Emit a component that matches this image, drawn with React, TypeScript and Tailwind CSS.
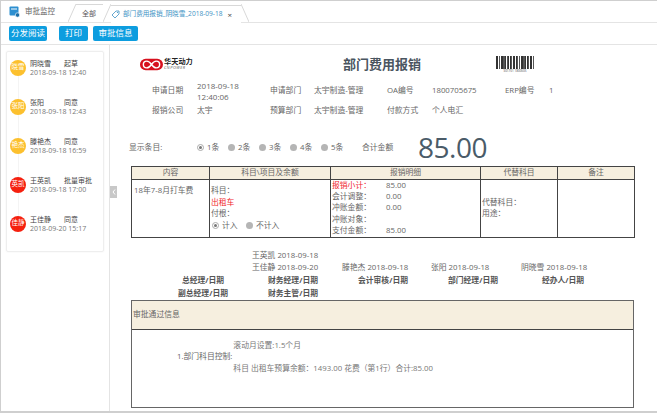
import React from "react";

const flow = [
  { tag: "晓雪", name: "阴晓雪", action: "起草", time: "2018-09-18 12:40", color: "bg-[#fcc02e]" },
  { tag: "张阳", name: "张阳", action: "同意", time: "2018-09-18 12:43", color: "bg-[#fcc02e]" },
  { tag: "艳杰", name: "滕艳杰", action: "同意", time: "2018-09-18 16:59", color: "bg-[#fcc02e]" },
  { tag: "英凯", name: "王英凯", action: "批量审批", time: "2018-09-18 17:00", color: "bg-[#f5200f]" },
  { tag: "佳静", name: "王佳静", action: "同意", time: "2018-09-20 15:17", color: "bg-[#f5200f]" },
];

const barWidths = [1, 1, 2, 1, 1, 2, 1, 2, 1, 1, 2, 1, 1, 1, 2, 2, 1, 1, 2, 1, 1, 2, 1, 1, 2];

function Slant({ flip }: { flip?: boolean }) {
  return (
    <svg width="8" height="18" viewBox="0 0 8 18" className="shrink-0 self-end">
      {flip ? (
        <path d="M0 0 L8 18" stroke="#d8d8d8" strokeWidth="1" fill="none" />
      ) : (
        <path d="M8 0 L0 18" stroke="#d8d8d8" strokeWidth="1" fill="none" />
      )}
    </svg>
  );
}

function Radio({ label, checked }: { label: string; checked?: boolean }) {
  return (
    <span className="flex items-center gap-[3px] w-[31px] shrink-0 whitespace-nowrap">
      <span
        className={
          checked
            ? "w-[7px] h-[7px] shrink-0 rounded-full border border-[#aaa] flex items-center justify-center"
            : "w-[7px] h-[7px] shrink-0 rounded-full bg-[#b5b5b5]"
        }
      >
        {checked && <span className="w-[3px] h-[3px] rounded-full bg-[#777]" />}
      </span>
      {label}
    </span>
  );
}

export default function App() {
  return (
    <div
      className="w-[657px] h-[413px] overflow-hidden bg-white flex flex-col border-t border-l border-b-2 border-[#cfcfcf] text-[#666] text-[7.8px] leading-none"
      style={{ fontFamily: '"Open Sans", "Noto Sans CJK SC", sans-serif' }}
    >
      {/* tab bar */}
      <div className="h-[22px] shrink-0 flex items-end border-b border-[#e4e4e4] relative">
        <div className="w-[67px] h-full flex items-center pl-[8px] gap-[5px]">
          <svg width="11" height="12" viewBox="0 0 11 12">
            <rect x="0.5" y="0.5" width="9" height="9" rx="1" fill="#2d8fd0" />
            <rect x="2" y="2.5" width="6" height="1" fill="#fff" />
            <circle cx="8.5" cy="9" r="2.2" fill="#1b6fa8" stroke="#fff" strokeWidth="0.6" />
          </svg>
          <span className="text-[#666] text-[7.5px] whitespace-nowrap">审批监控</span>
        </div>
        <Slant />
        <div className="w-[27px] h-[18px] border-t border-[#d8d8d8] flex items-center pl-[6px] text-[7px] text-[#555]">全部</div>
        <Slant />
        <div className="w-[130px] h-[18px] border-t border-[#d8d8d8] bg-white flex items-center gap-[3px] text-[6.6px] text-[#3d92c4] whitespace-nowrap -mb-px">
          <svg width="9" height="9" viewBox="0 0 9 9" className="shrink-0">
            <path d="M1 5 L5 1 H8 V4 L4 8 Z" fill="none" stroke="#3d92c4" strokeWidth="0.8" />
            <circle cx="6.5" cy="2.5" r="0.6" fill="#3d92c4" />
          </svg>
          部门费用报销_阴晓雪_2018-09-18
          <span className="ml-[2px] text-[#444] text-[8px]">×</span>
        </div>
        <Slant flip />
      </div>

      {/* toolbar */}
      <div className="h-[22px] shrink-0 flex items-center pl-[8px] border-b border-[#e4e4e4] text-white text-[8.5px]">
        <button className="w-[38px] h-[15px] rounded-[2px] bg-[#0d9ddf]">分发阅读</button>
        <button className="w-[29px] h-[15px] rounded-[2px] bg-[#0d9ddf] ml-[12px]">打印</button>
        <button className="w-[45px] h-[15px] rounded-[2px] bg-[#0d9ddf] ml-[5px]">审批信息</button>
      </div>

      <div className="flex-1 flex min-h-0 relative">
        {/* approval flow sidebar */}
        <aside className="w-[109px] shrink-0 border-r border-[#e4e4e4] pt-[6px] pl-[5px]">
          <div className="relative w-[98px] h-[201px] rounded-[2px] border border-[#eee] shadow-[0_0_2px_#eee] pt-[6px] pl-[3px] flex flex-col gap-[20px]">
            <span className="absolute left-[11px] top-[14px] h-[160px] w-px bg-[#f4f4f4]" />
            {flow.map((item) => (
              <div key={item.name} className="relative flex items-center gap-[3px] h-[19px]">
                <span
                  className={`w-[16px] h-[16px] rounded-full ${item.color} text-white text-[6.5px] flex items-center justify-center shrink-0`}
                >
                  {item.tag}
                </span>
                <div className="flex flex-col gap-[2px] ml-[1px] text-[7px] whitespace-nowrap">
                  <div className="flex text-[#444]">
                    <span className="w-[34px]">{item.name}</span>
                    <span>{item.action}</span>
                  </div>
                  <span className="text-[#777]">{item.time}</span>
                </div>
              </div>
            ))}
          </div>
        </aside>

        {/* collapse handle */}
        <div className="absolute left-[109px] top-[141px] w-[7px] h-[12px] bg-[#c8c8c8] flex items-center justify-center">
          <svg width="4" height="6" viewBox="0 0 4 6">
            <path d="M3 0.5 L1 3 L3 5.5" fill="none" stroke="#fff" strokeWidth="1" />
          </svg>
        </div>

        {/* form */}
        <main className="flex-1 min-w-0">
          <div className="flex items-center h-[16px] mt-[11px] ml-[30px]">
            <div className="w-[52px] flex items-center gap-[1px]">
              <svg width="23" height="13" viewBox="0 0 24 13" className="shrink-0">
                <rect x="0" y="0.5" width="24" height="12" rx="6" fill="#d7101e" />
                <path
                  d="M12 6.5 C10 3.5 8.5 3 7 3 C5 3 3.5 4.5 3.5 6.5 C3.5 8.5 5 10 7 10 C8.5 10 10 9.5 12 6.5 C14 3.5 15.5 3 17 3 C19 3 20.5 4.5 20.5 6.5 C20.5 8.5 19 10 17 10 C15.5 10 14 9.5 12 6.5 Z"
                  fill="none"
                  stroke="#fff"
                  strokeWidth="1.5"
                />
              </svg>
              <div className="flex flex-col gap-[1px] whitespace-nowrap">
                <span className="text-[7.2px] font-bold text-[#222]">华天动力</span>
                <span className="text-[4px] italic tracking-[0.5px] text-[#555]">CNPOWER</span>
              </div>
            </div>
            <h1 className="ml-[151px] text-[13px] font-bold text-[#4a5560] whitespace-nowrap">部门费用报销</h1>
            <div className="ml-[75px] flex flex-col items-center gap-[1px]">
              <div className="flex h-[13px] w-[38px] gap-[0.5px]">
                {barWidths.map((w, i) => (
                  <span key={i} className={w === 1 ? "w-[1px] bg-[#333]" : "w-[1.5px] bg-[#555]"} />
                ))}
              </div>
              <span className="text-[3px] text-[#444] whitespace-nowrap">S01701 1800505</span>
            </div>
          </div>

          {/* request info */}
          <div className="ml-[42px] mt-[8px] grid grid-cols-[45px_73px_44px_73px_45px_73px_44px_40px] gap-y-[5px] items-center whitespace-nowrap">
            <span>申请日期</span>
            <span className="text-[8px] leading-[11px]">
              2018-09-18
              <br />
              12:40:06
            </span>
            <span>申请部门</span>
            <span>太宇制造-管理</span>
            <span>OA编号</span>
            <span>1800705675</span>
            <span>ERP编号</span>
            <span>1</span>
            <span>报销公司</span>
            <span>太宇</span>
            <span>预算部门</span>
            <span>太宇制造-管理</span>
            <span>付款方式</span>
            <span>个人电汇</span>
          </div>

          {/* display count + total */}
          <div className="ml-[19px] mt-[18px] h-[30px] flex items-center whitespace-nowrap">
            <span className="w-[68px]">显示条目:</span>
            <Radio label="1条" checked />
            <Radio label="2条" />
            <Radio label="3条" />
            <Radio label="4条" />
            <Radio label="5条" />
            <span className="ml-[10px] w-[56px]">合计金额</span>
            <span className="text-[28px] tracking-[-0.5px] text-[#4a5b68] -mt-[2px]">85.00</span>
          </div>

          {/* expense table */}
          <table className="ml-[21px] mt-[3px] w-[503px] table-fixed border-collapse border border-[#666] text-left">
            <thead>
              <tr className="h-[13px] bg-[#f6efdf]">
                <th className="w-[78px] border border-[#444] font-normal text-center">内容</th>
                <th className="w-[121px] border border-[#444] font-normal text-center">科目\项目及余额</th>
                <th className="w-[150px] border border-[#444] font-normal text-center">报销明细</th>
                <th className="w-[77px] border border-[#444] font-normal text-center">代替科目</th>
                <th className="w-[77px] border border-[#444] font-normal text-center">备注</th>
              </tr>
            </thead>
            <tbody>
              <tr className="h-[58px]">
                <td className="border border-[#444] align-top pt-[7px] pl-[2px]">18年7-8月打车费</td>
                <td className="border border-[#444] pl-[1px]">
                  <div className="flex flex-col gap-[4px]">
                    <span>科目：</span>
                    <span className="text-[#f01c2c]">出租车</span>
                    <span>付根：</span>
                    <span className="flex items-center pl-[1px]">
                      <Radio label="计入" checked />
                      <span className="w-[3px]" />
                      <Radio label="不计入" />
                    </span>
                  </div>
                </td>
                <td className="border border-[#444] pl-[1px]">
                  <div className="grid grid-cols-[54px_1fr] gap-y-[3.5px]">
                    <span className="text-[#f01c2c]">报销小计：</span>
                    <span>85.00</span>
                    <span>会计调整：</span>
                    <span>0.00</span>
                    <span>冲账金额：</span>
                    <span>0.00</span>
                    <span>冲账对象：</span>
                    <span />
                    <span>支付金额：</span>
                    <span>85.00</span>
                  </div>
                </td>
                <td className="border border-[#444] pl-[1px]">
                  <div className="flex flex-col gap-[4px]">
                    <span>代替科目：</span>
                    <span>用途：</span>
                  </div>
                </td>
                <td className="border border-[#444]" />
              </tr>
            </tbody>
          </table>

          {/* sign-off dates */}
          <div className="ml-[142px] mt-[14px] grid grid-cols-[90px_89px_90px_80px] items-end whitespace-nowrap">
            <div className="flex flex-col gap-[4px]">
              <span>王英凯 2018-09-18</span>
              <span>王佳静 2018-09-20</span>
            </div>
            <span>滕艳杰 2018-09-18</span>
            <span>张阳 2018-09-18</span>
            <span>阴晓雪 2018-09-18</span>
          </div>

          {/* sign-off roles */}
          <div className="ml-[48px] mt-[6px] w-[450px] grid grid-cols-5 gap-y-[5px] text-center font-bold text-[#555] whitespace-nowrap">
            <span>总经理/日期</span>
            <span>财务经理/日期</span>
            <span>会计审核/日期</span>
            <span>部门经理/日期</span>
            <span>经办人/日期</span>
            <span>副总经理/日期</span>
            <span>财务主管/日期</span>
          </div>

          {/* approval info */}
          <section className="ml-[21px] mt-[2px] w-[503px] h-[108px] border border-[#666] flex flex-col">
            <div className="h-[29px] shrink-0 bg-[#f6efdf] border-b border-[#444] flex items-center pl-[1px]">审批通过信息</div>
            <div className="flex items-center mt-[12px] ml-[45px] whitespace-nowrap">
              <span>1.部门科目控制:</span>
              <div className="ml-[1px] flex flex-col gap-[15px] text-[#777]">
                <span>滚动月设置:1.5个月</span>
                <span>科目 出租车预算余额：1493.00 花费（第1行）合计:85.00</span>
              </div>
            </div>
          </section>
        </main>
      </div>
    </div>
  );
}
